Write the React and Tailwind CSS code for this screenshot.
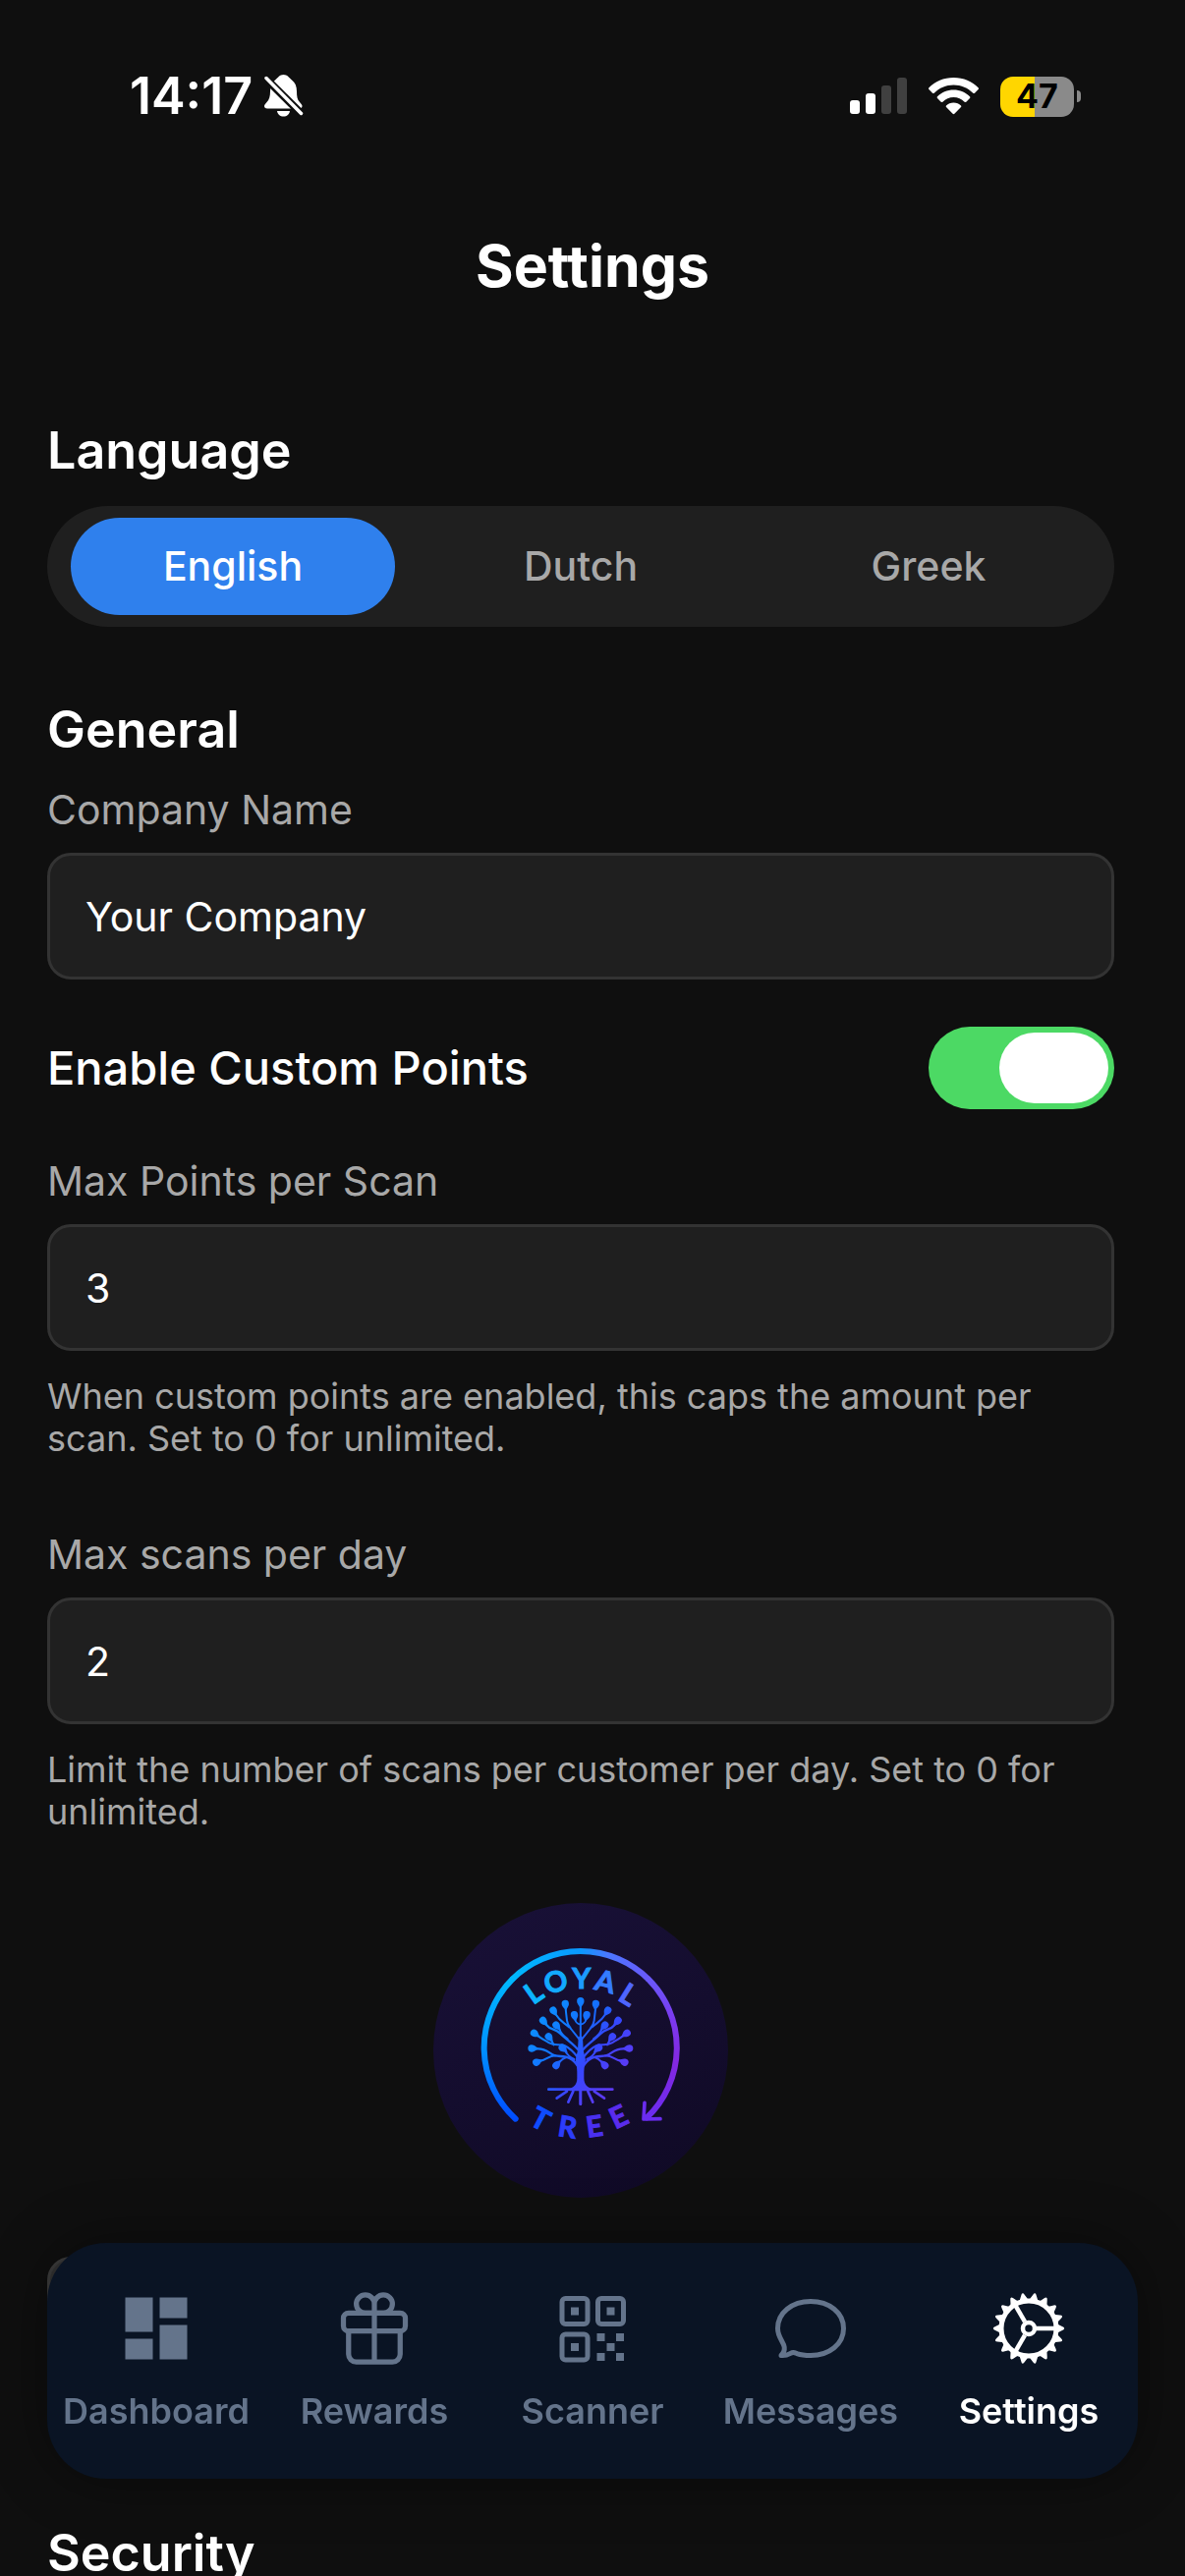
import React, { useState } from "react";
import clsx from "clsx";
import { MdDashboard } from "react-icons/md";
import { IoGiftOutline } from "react-icons/io5";

const QrIcon = (props) => (
  <svg viewBox="0 0 84 84" fill="none" {...props}>
    <g stroke="currentColor" strokeWidth="5">
      <rect x="11" y="11.500" width="26" height="26" rx="3.500" />
      <rect x="47.500" y="11.500" width="26" height="26" rx="3.500" />
      <rect x="11" y="48" width="26" height="26" rx="3.500" />
    </g>
    <g fill="currentColor">
      <rect x="20" y="20.500" width="8" height="8" />
      <rect x="56.500" y="20.500" width="8" height="8" />
      <rect x="20" y="57" width="8" height="8" />
      <rect x="46.500" y="47" width="8" height="8" />
      <rect x="66" y="47" width="8" height="8" />
      <rect x="56.500" y="57" width="8" height="8" />
      <rect x="46.500" y="67" width="8" height="8" />
      <rect x="66" y="67" width="8" height="8" />
    </g>
  </svg>
);

const ChatIcon = (props) => (
  <svg viewBox="0 0 84 84" fill="none" {...props}>
    <path
      d="M42 14.500C61 14.500 75.500 26 75.500 42S61 69.500 42 69.500C36 69.500 31.500 68.800 28 67.600 24.500 66 24 66 21 67.600 18.500 69 16 69.800 12 69.400 14.600 67 15.600 64 15.200 61 14.600 56 8.500 51 8.500 42 8.500 26 23 14.500 42 14.500Z"
      stroke="currentColor"
      strokeWidth="5"
      strokeLinejoin="round"
    />
  </svg>
);

const teeth = Array.from({ length: 18 }, (_, i) => i * 20);

const CogIcon = (props) => (
  <svg viewBox="0 0 84 84" fill="none" {...props}>
    <g stroke="currentColor">
      <circle cx="42" cy="42" r="28" strokeWidth="5" />
      <circle cx="42" cy="42" r="6" strokeWidth="4.500" />
      {[0, 120, 240].map((angle) => (
        <path key={angle} d="M50 42H70" strokeWidth="4.500" transform={`rotate(${angle} 42 42)`} />
      ))}
    </g>
    {teeth.map((angle) => (
      <path
        key={angle}
        d="M70 37 76.500 40.300Q78.200 41 78.200 42T76.500 43.700L70 47Z"
        fill="currentColor"
        transform={`rotate(${angle} 42 42)`}
      />
    ))}
  </svg>
);

const languages = ["English", "Dutch", "Greek"];

const tabs = [
  { label: "Dashboard", Icon: MdDashboard },
  { label: "Rewards", Icon: IoGiftOutline },
  { label: "Scanner", Icon: QrIcon },
  { label: "Messages", Icon: ChatIcon },
  { label: "Settings", Icon: CogIcon },
];

const StatusBar = () => (
  <div className="flex h-[196px] items-center justify-between pl-[132px] pr-[106px]">
    <div className="flex items-center gap-3">
      <span className="text-[52px] font-semibold leading-none">14:17</span>
      <svg width="40" height="44" viewBox="0 0 40 44" fill="none">
        <path
          d="M19.500 0C15.500 0 14 3 11 5.500 7.500 8 6 12 6 17c0 5-1 8.500-3.500 11C.5 30.500 0 31 0 32c0 1.500 1 2.500 3 2.500h32c2.500 0 3.500-1 3.500-2.500 0-1-.5-1.500-2.500-4-2.500-2.500-3-6-3-11s-1.500-9-5-11.500C25 3 23.500 0 19.500 0z"
          fill="#fff"
        />
        <path d="M13 37h13c-.5 3.500-3 5.500-6.500 5.500S13.500 40.500 13 37z" fill="#fff" />
        <path d="M-1 1.500 40 42" stroke="#0f0f0f" strokeWidth="8" />
        <path d="M2 3.500 37.500 39.500" stroke="#fff" strokeWidth="3.500" strokeLinecap="round" />
      </svg>
    </div>

    <div className="flex items-center gap-[22px]">
      <svg width="58" height="38" viewBox="0 0 58 38">
        <rect x="0" y="23" width="10" height="14" rx="3" fill="#fff" />
        <rect x="16" y="16" width="10" height="21" rx="3" fill="#fff" />
        <rect x="32" y="8" width="10" height="29" rx="3" fill="#404040" />
        <rect x="48" y="0" width="10" height="37" rx="3" fill="#404040" />
      </svg>
      <svg width="51" height="38" viewBox="0 0 51 38" fill="#fff">
        <path d="M25.500 0C15.500 0 6.500 4 .4 10.300c-.5.500-.5 1.200 0 1.700l3.600 3.700c.5.500 1.200.5 1.700 0C10.900 10.600 17.800 7.500 25.500 7.500s14.600 3.100 19.800 8.200c.5.500 1.200.5 1.700 0l3.600-3.700c.5-.5.500-1.200 0-1.700C44.500 4 35.500 0 25.500 0z" />
        <path d="M25.500 12.500c-6.500 0-12.300 2.600-16.500 6.800-.5.500-.5 1.200 0 1.700l3.700 3.700c.5.500 1.200.5 1.700 0 2.900-2.900 6.800-4.700 11.100-4.700s8.200 1.800 11.100 4.700c.5.500 1.200.5 1.700 0L42 21c.5-.5.500-1.200 0-1.700-4.200-4.200-10-6.800-16.500-6.800z" />
        <path d="M25.500 25.500c-3 0-5.600 1.200-7.500 3-.5.500-.5 1.100 0 1.600l6.600 6.700c.5.500 1.300.5 1.800 0l6.600-6.700c.5-.5.500-1.100 0-1.600-1.900-1.800-4.500-3-7.500-3z" />
      </svg>
      <div className="flex items-center gap-[3px]">
        <div className="flex h-[41px] w-[75px] items-center justify-center rounded-[13px] bg-[linear-gradient(90deg,#ffd600_35px,#8a8a8a_35px)] text-[34px] font-bold leading-none text-black">
          47
        </div>
        <div className="h-3 w-1 rounded-r-full bg-[#8a8a8a]" />
      </div>
    </div>
  </div>
);

const SectionTitle = ({ children }) => (
  <h2 className="mb-[26px] text-[52px] font-semibold leading-[60px]">{children}</h2>
);

const Field = ({ id, label, defaultValue, hint }) => (
  <div>
    <label htmlFor={id} className="block text-[41px] leading-[50px] text-[#a8a8a8]">
      {label}
    </label>
    <input
      id={id}
      type="text"
      defaultValue={defaultValue}
      className="mt-[19px] block h-[129px] w-full rounded-3xl border-3 border-[#333333] bg-[#1f1f1f] px-9 text-[41px] text-white outline-none"
    />
    {hint && <p className="mt-[25px] mb-[71px] text-[36px] leading-[43px] text-[#a8a8a8]">{hint}</p>}
  </div>
);

// x, y and angle of each leaf on the left half of the crown
const leaves = [
  [467, 390, -6],
  [431, 410, -32],
  [400, 441, -42],
  [373, 479, -56],
  [366, 525, -88],
  [380, 567, -112],
  [440, 576, -138],
  [459, 524, -48],
  [417, 490, -38],
  [440, 455, -40],
  [495, 424, -12],
];

const HalfTree = () => (
  <>
    <g fill="none" stroke="#fff" strokeWidth="6" strokeLinecap="round" strokeLinejoin="round">
      <path d="M468 405 472 440Q473 452 484 465L512 500" />
      <path d="M440 424C450 442 464 446 478 460" />
      <path d="M409 453C424 472 436 462 452 480 472 500 494 512 512 536" strokeWidth="7" />
      <path d="M449 467Q456 484 474 496" />
      <path d="M384 487C402 500 404 500 418 508 436 518 446 510 464 516 482 524 496 540 508 556" />
      <path d="M424 500 432 514" />
      <path d="M466 532Q474 548 494 558" />
      <path d="M380 526C412 524 416 542 436 547 462 552 486 544 508 584" strokeWidth="7" />
      <path d="M392 563C410 560 414 548 438 547" />
      <path d="M450 566Q458 556 470 552" />
      <path d="M496 434Q498 448 512 452" strokeWidth="5" />
    </g>
    {leaves.map(([x, y, angle]) => (
      <path
        key={x}
        d="M0 22C-3 11-11 8-11-2A11 11 0 0 1 11-2C11 8 3 11 0 22Z"
        fill="#fff"
        transform={`translate(${x} ${y}) rotate(${angle})`}
      />
    ))}
    <path d="M514 484 507 492 505 530 498 560Q503 574 503 596V616C503 634 494 644 476 650L480 655H514Z" fill="#fff" />
    <g fill="none" stroke="#fff" strokeWidth="8" strokeLinecap="round">
      <path d="M416 650H514" />
      <path d="M472 656 441 677" />
      <path d="M491 656 476 689" />
      <path d="M513.500 650V695" />
    </g>
  </>
);

const letters = [
  { char: "L", x: 388, y: 380, angle: -35, fill: "#0cb4ff" },
  { char: "O", x: 446, y: 351, angle: -16, fill: "#12aaff" },
  { char: "Y", x: 516, y: 341, angle: 0, fill: "#1c9cff" },
  { char: "A", x: 582, y: 351, angle: 14, fill: "#347cff" },
  { char: "L", x: 644, y: 387, angle: 32, fill: "#4f66ff" },
  { char: "T", x: 377, y: 768, angle: 28, fill: "#0f4cff" },
  { char: "R", x: 469, y: 796, angle: 9, fill: "#2c3cfa" },
  { char: "E", x: 560, y: 794, angle: -8, fill: "#4a30f0" },
  { char: "E", x: 643, y: 762, angle: -25, fill: "#5a2cec" },
];

const Logo = () => (
  <svg className="size-[300px]" viewBox="64 81 900 900" role="img" aria-label="Loyal Tree">
    <defs>
      <linearGradient id="disc" x1="0.3" y1="0" x2="0.7" y2="1">
        <stop offset="0" stopColor="#181036" />
        <stop offset="1" stopColor="#100a26" />
      </linearGradient>
      <linearGradient id="ringLeft" gradientUnits="userSpaceOnUse" x1="218" y1="740" x2="218" y2="314">
        <stop offset="0" stopColor="#004cff" />
        <stop offset="0.5" stopColor="#0090ff" />
        <stop offset="1" stopColor="#00b8ff" />
      </linearGradient>
      <linearGradient id="ringTop" gradientUnits="userSpaceOnUse" x1="304" y1="0" x2="722" y2="0">
        <stop offset="0" stopColor="#00b8ff" />
        <stop offset="0.5" stopColor="#0a98ff" />
        <stop offset="0.7" stopColor="#4a78ff" />
        <stop offset="1" stopColor="#6a58fa" />
      </linearGradient>
      <linearGradient id="ringRight" gradientUnits="userSpaceOnUse" x1="0" y1="314" x2="0" y2="740">
        <stop offset="0" stopColor="#6a58fa" />
        <stop offset="0.3" stopColor="#7c38ee" />
        <stop offset="0.6" stopColor="#8428e0" />
        <stop offset="1" stopColor="#6a2cf0" />
      </linearGradient>
      <linearGradient id="crown" gradientUnits="userSpaceOnUse" x1="390" y1="400" x2="640" y2="600">
        <stop offset="0" stopColor="#0a94ff" />
        <stop offset="0.4" stopColor="#1470ff" />
        <stop offset="0.65" stopColor="#3448ff" />
        <stop offset="1" stopColor="#5c3af4" />
      </linearGradient>
      <mask id="tree" maskUnits="userSpaceOnUse" x="330" y="350" width="370" height="370">
        <HalfTree />
        <g transform="translate(1027 0) scale(-1 1)">
          <HalfTree />
        </g>
        <path d="M513.500 390V500" stroke="#fff" strokeWidth="6" />
        <path d="M513.500 404C510 393 502.500 390 502.500 380A11 11 0 0 1 524.500 380C524.500 390 517 393 513.500 404Z" fill="#fff" />
      </mask>
    </defs>

    <circle cx="514" cy="531" r="450" fill="url(#disc)" />

    <g fill="none" strokeWidth="18">
      <path d="M315 740A295 295 0 0 1 305 314" stroke="url(#ringLeft)" strokeLinecap="round" />
      <path d="M721 314A295 295 0 0 1 716 736" stroke="url(#ringRight)" strokeLinecap="round" />
      <path d="M305 314A295 295 0 0 1 721 314" stroke="url(#ringTop)" />
      <path d="M709 691 706 741 757 740" stroke="#6a2cf0" strokeWidth="11" strokeLinecap="round" strokeLinejoin="round" />
    </g>

    <g fontSize="88" fontFamily="Lato, sans-serif" fontWeight="700" textAnchor="middle" strokeWidth="3">
      {letters.map(({ char, x, y, angle, fill }) => (
        <text key={x} fill={fill} stroke={fill} transform={`translate(${x} ${y}) rotate(${angle})`}>
          {char}
        </text>
      ))}
    </g>

    <rect x="330" y="350" width="370" height="370" fill="url(#crown)" mask="url(#tree)" />
  </svg>
);

const TabBar = () => (
  <nav className="fixed inset-x-12 bottom-[99px] flex h-[240px] rounded-[60px] bg-[#0a1424] pt-[45px] shadow-[0_0_60px_rgba(0,0,0,0.4)]">
    {tabs.map(({ label, Icon }) => (
      <a
        key={label}
        href="#"
        className={clsx(
          "flex flex-1 flex-col items-center gap-[21px] text-[36px] font-semibold leading-[43px]",
          label === "Settings" ? "text-white" : "text-[#64748b]"
        )}
      >
        <Icon className="size-[84px]" />
        {label}
      </a>
    ))}
  </nav>
);

export default function App() {
  const [language, setLanguage] = useState("English");
  const [customPoints, setCustomPoints] = useState(true);

  return (
    <div className="h-screen overflow-hidden bg-[#0f0f0f] font-['Inter',sans-serif] text-white">
      <StatusBar />
      <h1 className="mt-[39px] text-center text-[59px] font-bold leading-[72px]">Settings</h1>

      <main className="mt-[122px] pl-12 pr-[72px]">
        <SectionTitle>Language</SectionTitle>
        <div className="flex rounded-full bg-[#1f1f1f] p-3">
          {languages.map((name) => (
            <button
              key={name}
              type="button"
              aria-pressed={language === name}
              onClick={() => setLanguage(name)}
              className={clsx(
                "mx-3 h-[99px] flex-1 rounded-full text-[41px] font-medium",
                language === name ? "bg-[#2f80ed] text-white" : "text-[#a8a8a8]"
              )}
            >
              {name}
            </button>
          ))}
        </div>

        <div className="mt-[75px]">
          <SectionTitle>General</SectionTitle>
          <Field id="company" label="Company Name" defaultValue="Your Company" />

          <div className="my-12 flex items-center justify-between">
            <label htmlFor="custom-points" className="text-[47px] font-medium">
              Enable Custom Points
            </label>
            <input
              id="custom-points"
              type="checkbox"
              role="switch"
              checked={customPoints}
              onChange={(e) => setCustomPoints(e.target.checked)}
              className="flex h-[84px] w-[189px] appearance-none items-center rounded-full bg-[#39393d] px-[6px] before:block before:h-[72px] before:w-[111px] before:rounded-full before:bg-white checked:bg-[#4cd964] checked:before:ml-auto"
            />
          </div>

          <Field
            id="max-points"
            label="Max Points per Scan"
            defaultValue="3"
            hint="When custom points are enabled, this caps the amount per scan. Set to 0 for unlimited."
          />
          <Field
            id="max-scans"
            label="Max scans per day"
            defaultValue="2"
            hint="Limit the number of scans per customer per day. Set to 0 for unlimited."
          />
        </div>

        <div className="flex justify-center">
          <Logo />
        </div>
        <div className="mt-[60px] h-[144px] rounded-3xl border-3 border-[#3d3d3d] bg-[#333333]" />

        <div className="mt-32">
          <SectionTitle>Security</SectionTitle>
        </div>
      </main>

      <TabBar />
    </div>
  );
}
